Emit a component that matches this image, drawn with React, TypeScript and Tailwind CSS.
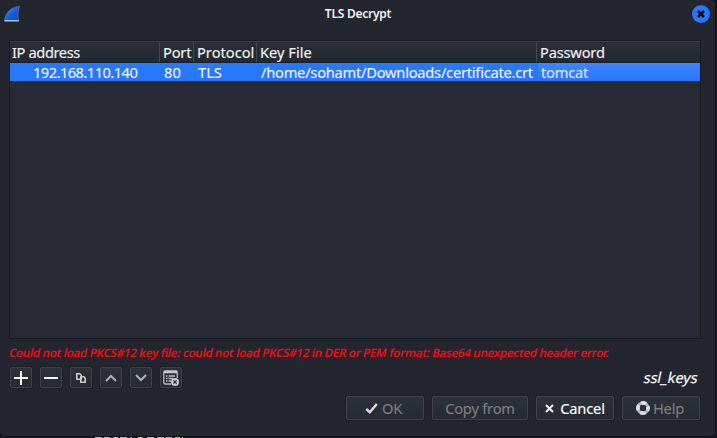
import React from "react";

const btn =
  "flex items-center justify-center rounded-[2px] border border-[#40434b] bg-linear-to-b from-[#2d313a] to-[#262a33] shadow-[0_0_0_1px_#1e2029]";

function ToolButton({ children }: { children: React.ReactNode }) {
  return <button className={`${btn} h-[21px] w-[22px]`}>{children}</button>;
}

function Fin() {
  return (
    <svg width="16" height="16" viewBox="0 0 16 16">
      <defs>
        <linearGradient id="fin" x1="0" y1="0" x2="1" y2="1">
          <stop offset="0" stopColor="#4fa0ee" />
          <stop offset=".5" stopColor="#1260dc" />
          <stop offset="1" stopColor="#0747bd" />
        </linearGradient>
      </defs>
      <path d="M.5 15C1.5 7 6.5 1.2 15.5.5C13.7 5 13.5 10 14.8 15Z" fill="url(#fin)" stroke="#5f7995" strokeWidth=".8" />
      <path d="M.7 14.7H14.7" stroke="#b4c9ef" strokeWidth="1.3" />
    </svg>
  );
}

const cell = "flex shrink-0 items-center whitespace-pre";

export default function App() {
  return (
    <div className="flex h-[438px] w-[717px] flex-col overflow-hidden bg-[#17171f] font-['Noto_Sans',sans-serif] text-[14.67px] text-[#f2f2f3] [-webkit-text-stroke:0.15px]">
      <div className="flex h-[437px] w-[716px] shrink-0 flex-col rounded-b-[5px] rounded-tr-[5px] border-r border-b border-[#101219] bg-[#23262f]">
        <header className="flex h-10 shrink-0 items-start justify-between pt-[5px] pr-[5px] pl-[4px]">
          <div className="w-[17px] pt-px"><Fin /></div>
          <h1 className="pt-[2px] pl-[3px] text-[12px] leading-[14px] font-semibold tracking-[-0.25px] [-webkit-text-stroke:0px]">TLS Decrypt</h1>
          <button className="flex size-[18px] items-center justify-center rounded-full bg-[#2777ff]">
            <svg width="8" height="8" viewBox="0 0 8 8"><path d="M1 1L7 7M7 1L1 7" stroke="#090d17" strokeWidth="2.5" /></svg>
          </button>
        </header>

        <section className="ml-[9px] flex h-[299px] w-[692px] shrink-0 flex-col border border-[#191b22] bg-[#272a34]">
          <div className="flex h-[22px] shrink-0 border-t border-b border-t-[#3c4048] border-b-[#1c1f26] bg-linear-to-b from-[#2a2e36] to-[#242831] leading-5">
            <div className={`${cell} w-[150px] border-r border-[#434750] pl-[2px]`}><span className="tracking-[-0.4px]">IP address</span></div>
            <div className={`${cell} w-[34px] border-r border-[#434750] pl-[3px]`}><span className="tracking-[-0.2px]">Port</span></div>
            <div className={`${cell} w-[63px] border-r border-[#434750] pl-[3px]`}><span>Protocol</span></div>
            <div className={`${cell} w-[280px] border-r border-[#434750] pl-[3px]`}><span>Key File</span></div>
            <div className={`${cell} grow pl-[3px]`}><span className="tracking-[-0.2px]">Password</span></div>
          </div>
          <div className="flex h-[18px] shrink-0 bg-[#2777ff] leading-[18px]">
            <div className={`${cell} w-[150px] pl-[23px]`}><span className="tracking-[-0.54px]">192.168.110.140</span></div>
            <div className={`${cell} w-[34px] pl-[4px]`}><span>80</span></div>
            <div className={`${cell} w-[63px] pl-[4px]`}><span>TLS</span></div>
            <div className={`${cell} w-[281px] pl-[4px]`}><span className="tracking-[-0.24px]">/home/sohamt/Downloads/certificate.crt</span></div>
            <div className={`${cell} grow bg-linear-to-b from-[#4085ff] to-[#2676ff] pl-[3px] text-[#dce6f5]`}><span className="tracking-[-0.2px]">tomcat</span></div>
          </div>
        </section>

        <p className="ml-[9px] h-[28px] shrink-0 pt-[7px] text-[11.5px] leading-[14px] font-semibold whitespace-nowrap text-[#f50b0e] [-webkit-text-stroke:0px]">
          <span className="inline-block -skew-x-12 tracking-[-0.25px]">Could not load PKCS#12 key file: could not load PKCS#12 in DER or PEM format: Base64 unexpected header error.</span>
        </p>

        <div className="flex h-[29px] shrink-0 items-start justify-between pr-[17px] pl-[10px]">
          <div className="flex gap-2">
            <ToolButton><svg width="14" height="14"><path d="M0 7H14M7 0V14" stroke="#f2f3f3" strokeWidth="2" /></svg></ToolButton>
            <ToolButton><svg width="14" height="14"><path d="M0 7H14" stroke="#f2f3f3" strokeWidth="2" /></svg></ToolButton>
            <ToolButton><svg width="10" height="10" fill="none" stroke="#c9cccc" strokeWidth="1.6"><path d="M.8.8H3.7L5.2 2.3V6.2H.8ZM4.8 3.8H7.7L9.2 5.3V9.2H4.8Z" /></svg></ToolButton>
            <ToolButton><svg width="12" height="8" fill="none" stroke="#aeb1b5" strokeWidth="2"><path d="M1 7L6 2L11 7" /></svg></ToolButton>
            <ToolButton><svg width="12" height="8" fill="none" stroke="#aeb1b5" strokeWidth="2"><path d="M1 1L6 6L11 1" /></svg></ToolButton>
            <ToolButton>
              <svg width="16" height="16" fill="none" className="shrink-0">
                <path d="M8 14H2.5Q.8 14 .8 12.3V2.5Q.8 1 2.5 1H13Q14.3 1 14.3 2.5V8" stroke="#b7babd" strokeWidth="1.3" />
                <path d="M1 2H14" stroke="#c6c9cb" strokeWidth="2.5" />
                <path d="M3 6H4.5M5.5 6H12M3 8.5H4.5M5.5 8.5H10M3 11H4.5M5.5 11H8" stroke="#b7babd" strokeWidth="1.3" />
                <circle cx="12" cy="12" r="4" fill="#c6c9cb" />
                <path d="M10.4 10.4L13.6 13.6M13.6 10.4L10.4 13.6" stroke="#282c35" strokeWidth="1.3" />
              </svg>
            </ToolButton>
          </div>
          <span className="-skew-x-12 leading-5 tracking-[-0.1px] text-white">ssl_keys</span>
        </div>

        <footer className="flex h-6 shrink-0 gap-2 pl-[346px] leading-5 text-[#7d7e80]">
          <button className={`${btn} w-[78px] gap-[4px] pr-[3px]`}>
            <svg width="13" height="11" fill="none"><path d="M1.2 6L4.8 9.2L11.8 1" stroke="#dadcdf" strokeWidth="2.4" /></svg><span className="tracking-[-0.3px]">OK</span>
          </button>
          <button className={`${btn} w-[96px]`}><span className="tracking-[-0.2px]">Copy from</span></button>
          <button className={`${btn} w-[78px] gap-[6px] text-white`}>
            <svg width="9" height="9"><path d="M1 1L8 8M8 1L1 8" stroke="#f1f1f1" strokeWidth="2" /></svg><span className="tracking-[-0.15px]">Cancel</span>
          </button>
          <button className={`${btn} w-[78px] gap-[3px] pr-[2px]`}>
            <svg width="14" height="14" fill="none"><circle cx="7" cy="7" r="5" stroke="#b4b6bd" strokeWidth="3.2" /><circle cx="7" cy="7" r="5.1" stroke="#e0e1e8" strokeWidth="3.6" strokeDasharray="5 3.01" strokeDashoffset="2.5" /></svg><span className="tracking-[-0.2px]">Help</span>
          </button>
        </footer>
      </div>
      <div className="h-px shrink-0 overflow-hidden pl-[95px]">
        <svg width="88" height="1"><path d="M0 .5H88" stroke="#b5b5b8" strokeDasharray="7 2 6 3 5 2 7 3 2 6 5 4 7 3" /></svg>
      </div>
    </div>
  );
}
